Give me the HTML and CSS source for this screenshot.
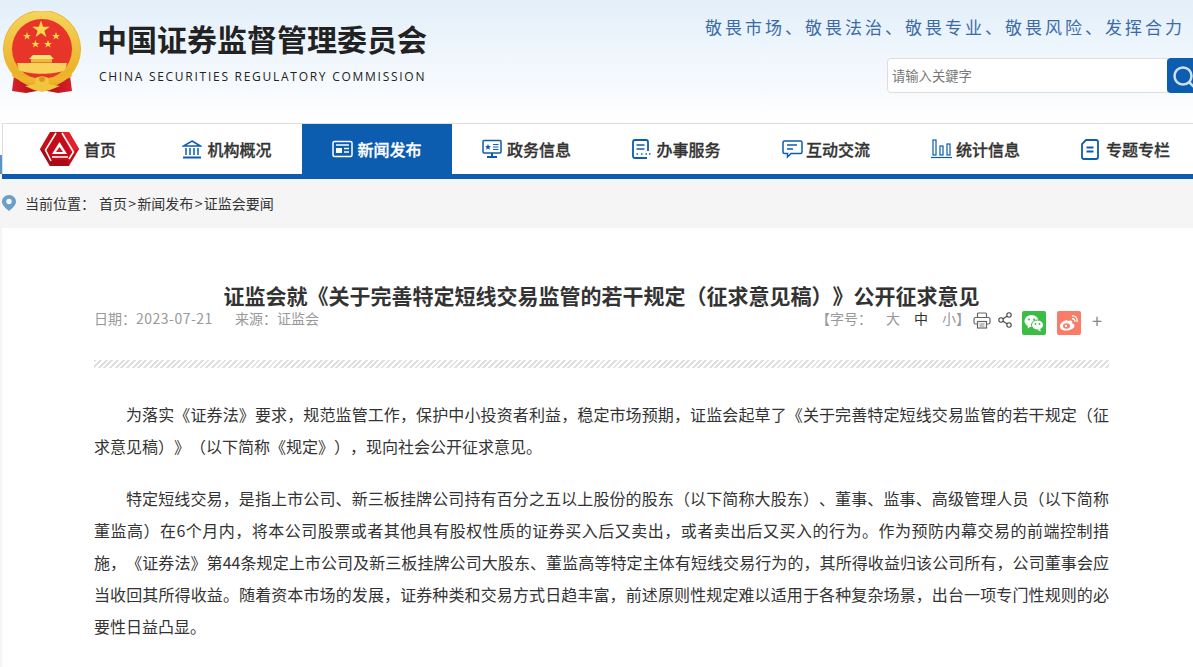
FILE: index.html
```html
<!DOCTYPE html>
<html lang="zh-CN">
<head>
  <meta charset="UTF-8" />
  <meta name="viewport" content="width=device-width, initial-scale=1" />
  <title>证监会就《关于完善特定短线交易监管的若干规定（征求意见稿）》公开征求意见</title>
  <link rel="stylesheet" href="styles.css">
</head>
<body>

<header class="header">
  <div class="wrap header-row">
    <div class="brand">
      <svg class="emblem" width="84" height="84" viewBox="2 11 84 84">
        <defs>
          <linearGradient id="gold" x1="0" y1="0" x2="0" y2="1">
            <stop offset="0" stop-color="#f6d45c"/>
            <stop offset="1" stop-color="#e9a91f"/>
          </linearGradient>
          <linearGradient id="drape" x1="0" y1="0" x2="1" y2="0">
            <stop offset="0" stop-color="#d8202a"/>
            <stop offset="0.5" stop-color="#a80f14"/>
            <stop offset="1" stop-color="#d8202a"/>
          </linearGradient>
        </defs>
        <path d="M15 68 L12 91 L26 93 L42 90 L58 93 L72 91 L69 68 Z" fill="url(#drape)"/>
        <circle cx="42" cy="49" r="38.500" fill="url(#gold)" stroke="#eab62e" stroke-width="1"/>
        <circle cx="42" cy="49" r="30" fill="#e8352a"/>
        <polygon points="41,20.500 43.100,26.800 49.700,26.800 44.400,30.700 46.400,37 41,33.100 35.600,37 37.600,30.700 32.300,26.800 38.900,26.800" fill="#fbd84e"/>
        <polygon points="27,32 28,34.900 31,34.900 28.600,36.700 29.500,39.500 27,37.800 24.500,39.500 25.400,36.700 23,34.900 26,34.900" fill="#fbd84e"/>
        <polygon points="56,32 57,34.900 60,34.900 57.600,36.700 58.500,39.500 56,37.800 53.500,39.500 54.400,36.700 52,34.900 55,34.900" fill="#fbd84e"/>
        <polygon points="35.500,40 36.500,42.900 39.500,42.900 37.100,44.700 38,47.500 35.500,45.800 33,47.500 33.900,44.700 31.500,42.900 34.500,42.900" fill="#fbd84e"/>
        <polygon points="48,40 49,42.900 52,42.900 49.600,44.700 50.500,47.500 48,45.800 45.500,47.500 46.400,44.700 44,42.900 47,42.900" fill="#fbd84e"/>
        <path d="M33 55 H50 L54 59 H29 Z" fill="#fce27a"/>
        <rect x="31" y="59" width="21" height="3.500" fill="#efba39"/>
        <path d="M17 63 H67 L65 70 C56 75 28 75 19 70 Z" fill="#f8d25a"/>
        <path d="M13 72 C22 80 62 80 71 72 L72 76 C60 86 24 86 12 76 Z" fill="#eeb52c"/>
        <path d="M25 86 L35 84 L36 78 C38 76 46 76 48 78 L49 84 L60 86 L50 90 L42 92 L34 90 Z" fill="#f2c440"/>
        <circle cx="42" cy="79" r="3" fill="#d99a1a"/>
      </svg>
      <div class="brand-text">
        <h1 class="brand-cn">中国证券监督管理委员会</h1>
        <div class="brand-en">CHINA SECURITIES REGULATORY COMMISSION</div>
      </div>
    </div>
    <div class="header-right">
      <div class="slogan">敬畏市场、敬畏法治、敬畏专业、敬畏风险、发挥合力</div>
      <form class="search">
        <input class="search-input" type="text" placeholder="请输入关鍵字" />
        <button class="search-btn" type="button" aria-label="搜索">
          <svg width="30" height="30" viewBox="0 0 30 30" fill="none" stroke="#cfe0f0" stroke-width="2.500"><circle cx="11" cy="15" r="8.500"/><path d="M17 21 L22 26"/></svg>
        </button>
      </form>
    </div>
  </div>
</header>

<div class="nav-shell">
  <nav class="nav">
    <ul class="nav-list">
      <li class="nav-item nav-item-first">
        <svg class="logo-mark" width="39" height="34" viewBox="0 0 39 34">
          <polygon points="10,0 29,0 39,17 29,34 10,34 0,17" fill="#c40d18"/>
          <polygon points="22,0 29,0 39,17 31,20" fill="#e4202c"/>
          <polygon points="0,17 10,34 29,34 27,28 11,28 6,18" fill="#a90a13"/>
          <path d="M16 1 L5.500 18 L11 29 M22 1 L33.500 20 L29 27 M12 25 H28" fill="none" stroke="#fff" stroke-width="1.600"/>
          <path d="M19.500 10 L27 22 H12 Z" fill="#fff"/>
          <polygon points="19.500,15 23,20 16,20" fill="#d5141f"/>
        </svg>
        <span>首页</span>
      </li>
      <li class="nav-item nav-item-wide">
        <svg class="nav-icon" width="20" height="20" viewBox="0 0 20 20" fill="none" stroke="currentColor" stroke-width="1.500"><path d="M10 2 L18.500 7 H1.500 Z"/><path d="M4 9 V16 M8 9 V16 M12 9 V16 M16 9 V16"/><path d="M1 18.500 H19" stroke-width="2"/></svg>
        <span>机构概况</span>
      </li>
      <li class="nav-item active">
        <svg class="nav-icon" width="21" height="18" viewBox="0 0 21 18" fill="none" stroke="currentColor" stroke-width="1.500"><rect x="1" y="1.500" width="19" height="15" rx="1.500"/><path d="M4 5 H17"/><rect x="4" y="8" width="6" height="5" fill="currentColor" stroke="none"/><path d="M12 8.500 H17 M12 12 H17"/></svg>
        <span>新闻发布</span>
      </li>
      <li class="nav-item nav-item-mid">
        <svg class="nav-icon" width="20" height="20" viewBox="0 0 20 20" fill="none" stroke="currentColor" stroke-width="1.500"><rect x="1" y="1.500" width="18" height="12.500" rx="1"/><path d="M6 5 L6.900 7 L9 7.200 L7.400 8.600 L7.900 10.700 L6 9.600 L4.100 10.700 L4.600 8.600 L3 7.200 L5.100 7 Z" fill="currentColor" stroke="none"/><path d="M11 5.500 H16.500 M11 8 H16.500 M11 10.500 H16.500" stroke-width="1.200"/><path d="M10 14 V17 M5 18 H15" stroke-width="2"/></svg>
        <span>政务信息</span>
      </li>
      <li class="nav-item nav-item-mid">
        <svg class="nav-icon" width="19" height="20" viewBox="0 0 19 20" fill="none" stroke="currentColor" stroke-width="1.800"><path d="M15 19 H3 Q1 19 1 17 V3 Q1 1 3 1 H14 Q16 1 16 3 V12"/><path d="M4.500 6 H12.500 M4.500 10 H12.500" stroke-width="1.500"/><path d="M4.500 15 H6 M9 15 H10.500 M13.500 15 H15 M17 15 H18.500" stroke-width="1.500"/></svg>
        <span>办事服务</span>
      </li>
      <li class="nav-item nav-item-tight">
        <svg class="nav-icon" width="21" height="19" viewBox="0 0 21 19" fill="none" stroke="currentColor" stroke-width="1.500"><path d="M2.500 1 H18.500 Q20 1 20 2.500 V12 Q20 13.500 18.500 13.500 H9 L5.500 17 V13.500 H2.500 Q1 13.500 1 12 V2.500 Q1 1 2.500 1 Z"/><path d="M5 5 H15 M5 9 H11"/></svg>
        <span>互动交流</span>
      </li>
      <li class="nav-item nav-item-left">
        <svg class="nav-icon" width="21" height="20" viewBox="0 0 21 20" fill="none" stroke="currentColor" stroke-width="1.200"><rect x="2" y="1" width="3" height="15"/><rect x="9" y="7" width="3" height="9"/><rect x="16" y="5" width="3" height="11"/><path d="M0 18.500 H21"/></svg>
        <span>统计信息</span>
      </li>
      <li class="nav-item nav-item-last">
        <svg class="nav-icon" width="18" height="21" viewBox="0 0 18 21" fill="none" stroke="currentColor" stroke-width="1.800"><path d="M5 1 H15 Q17 1 17 3 V18 Q17 20 15 20 H3 Q1 20 1 18 V5 Z"/><path d="M5.500 8.500 H12.500 M5.500 12.500 H12.500"/></svg>
        <span>专题专栏</span>
      </li>
    </ul>
  </nav>
</div>

<div class="crumb">
  <div class="wrap crumb-row">
    <svg class="crumb-pin" width="14" height="16" viewBox="0 0 14 16"><path d="M7 0 C3 0 0 3 0 6.500 C0 10.500 4 13.500 7 16 C10 13.500 14 10.500 14 6.500 C14 3 11 0 7 0 Z" fill="#6a9fc9"/><circle cx="7" cy="6.500" r="2.700" fill="#f5f5f5"/></svg>
    <span class="crumb-label">当前位置：</span>
    <span>首页<span class="sep">&gt;</span>新闻发布<span class="sep">&gt;</span>证监会要闻</span>
  </div>
</div>

<main class="wrap article">
  <h2 class="article-title">证监会就《关于完善特定短线交易监管的若干规定（征求意见稿）》公开征求意见</h2>
  <div class="meta">
    <div class="meta-left">
      <span class="meta-date">日期：<span class="digits">2023-07-21</span></span>
      <span>来源：证监会</span>
    </div>
    <div class="meta-right">
      <span class="fontsize">【字号：</span>
      <span class="size-opt">大</span>
      <span class="size-opt current">中</span>
      <span class="size-opt">小</span>
      <span class="fontsize-end">】</span>
      <svg class="tool" width="18" height="17" viewBox="0 0 18 17" fill="none" stroke="#666" stroke-width="1.200"><rect x="4.500" y="1" width="9" height="4.500" rx="1"/><path d="M4 12 H2.500 Q1 12 1 10.500 V7 Q1 5.500 2.500 5.500 H15.500 Q17 5.500 17 7 V10.500 Q17 12 15.500 12 H14"/><rect x="4.500" y="9.500" width="9" height="6.500"/><path d="M6.500 12 H11.500 M6.500 14 H11.500" stroke-width="0.800"/></svg>
      <svg class="tool" width="14" height="16" viewBox="0 0 14 16" fill="none" stroke="#444" stroke-width="1.100"><circle cx="3" cy="8" r="2.200"/><circle cx="11" cy="3" r="2.200"/><circle cx="11" cy="13" r="2.200"/><path d="M5 6.800 L9 4.200 M5 9.200 L9 11.800"/></svg>
      <span class="share share-wx">
        <svg width="20" height="18" viewBox="0 0 20 18"><ellipse cx="7.500" cy="7" rx="7" ry="6" fill="#fff"/><path d="M4 11.500 L3.500 14.500 L7 12.500 Z" fill="#fff"/><ellipse cx="13.500" cy="11" rx="6" ry="5" fill="#fff" stroke="#3abd45"/><path d="M16 15 L17 17.500 L13.500 16 Z" fill="#fff"/><circle cx="5" cy="5.500" r="1" fill="#3abd45"/><circle cx="10" cy="5.500" r="1" fill="#3abd45"/><circle cx="11.500" cy="10" r="0.900" fill="#3abd45"/><circle cx="15.500" cy="10" r="0.900" fill="#3abd45"/></svg>
      </span>
      <span class="share share-wb">
        <svg width="20" height="18" viewBox="0 0 20 18" fill="none"><path d="M8 6 C3.500 7 .5 10 1 13 C1.500 16 5 17 8.500 16.500 C12.500 16 15.500 14 15.500 11.500 C15.500 10 14 9.500 13 9.200 C14 7 12.500 5.500 8 7.200 C9 5.500 8.500 5.500 8 6 Z" fill="#fff"/><ellipse cx="7.500" cy="12" rx="3.500" ry="2.700" fill="#f97c68"/><circle cx="7" cy="12" r="1.200" fill="#fff"/><path d="M13 2 C16 1.500 19 4 18 8 M13 4.800 C15 4.500 16.300 6 15.800 7.800" stroke="#fff" stroke-width="1.300"/></svg>
      </span>
      <span class="more">+</span>
    </div>
  </div>
  <div class="stripe"></div>
  <div class="article-body">
    <p>为落实《证券法》要求，规范监管工作，保护中小投资者利益，稳定市场预期，证监会起草了《关于完善特定短线交易监管的若干规定（征求意见稿）》（以下简称《规定》），现向社会公开征求意见。</p>
    <p>特定短线交易，是指上市公司、新三板挂牌公司持有百分之五以上股份的股东（以下简称大股东）、董事、监事、高级管理人员（以下简称董监高）在6个月内，将本公司股票或者其他具有股权性质的证券买入后又卖出，或者卖出后又买入的行为。作为预防内幕交易的前端控制措施，《证券法》第44条规定上市公司及新三板挂牌公司大股东、董监高等特定主体有短线交易行为的，其所得收益归该公司所有，公司董事会应当收回其所得收益。随着资本市场的发展，证券种类和交易方式日趋丰富，前述原则性规定难以适用于各种复杂场景，出台一项专门性规则的必要性日益凸显。</p>
  </div>
</main>

</body>
</html>
```

FILE: styles.css
```css
html, body {
  margin: 0;
  overflow-x: hidden;
}
body {
  font-family: "Noto Sans CJK SC", "Liberation Sans", sans-serif;
  color: #333;
  background: #f5f5f5;
  text-spacing-trim: space-all;
}
.wrap {
  width: 1200px;
  margin-left: 2px;
  box-sizing: border-box;
}
.header {
  height: 123px;
  background: linear-gradient(#e3effa, #fff);
}
.header-row {
  display: flex;
  justify-content: space-between;
  height: 100%;
}
.brand {
  display: flex;
  padding-top: 11px;
}
.emblem {
  flex: none;
}
.brand-text {
  margin-left: 13px;
}
.brand-cn {
  margin: 7px 0 0 -2px;
  font-size: 30px;
  line-height: 40px;
  font-weight: 700;
  color: #222;
}
.brand-en {
  margin-top: 9px;
  font-family: "Open Sans", "Liberation Sans", sans-serif;
  font-size: 12px;
  line-height: 20px;
  letter-spacing: 1.730px;
  color: #222;
  white-space: nowrap;
}
.header-right {
  display: flex;
  flex-direction: column;
  align-items: flex-end;
  padding-top: 14px;
}
.slogan {
  margin-right: 17px;
  font-size: 17px;
  line-height: 26px;
  letter-spacing: 3px;
  color: #3a6ba6;
  white-space: nowrap;
}
.search {
  display: flex;
  margin-top: 18px;
}
.search-input {
  width: 281px;
  height: 35px;
  padding: 0 4px;
  box-sizing: border-box;
  border: 1px solid #ddd;
  border-radius: 4px 0 0 4px;
  font-family: inherit;
  font-size: 13.300px;
  background: #fff;
}
.search-input::placeholder {
  color: #777;
}
.search-btn {
  display: flex;
  align-items: center;
  width: 35px;
  height: 35px;
  padding: 0 0 0 5px;
  border: none;
  border-radius: 4px 0 0 4px;
  background: #0c5cb0;
  margin-left: -1px;
}
.nav-shell {
  position: relative;
  background: #fff;
}
.nav-shell::before {
  content: "";
  position: absolute;
  left: 0;
  bottom: 5px;
  width: 2px;
  height: 19px;
  background: #5b93c8;
}
.nav {
  margin-left: 2px;
  border-top: 1px solid #ddd;
  border-bottom: 5px solid #0c5cb0;
  box-shadow: inset 1px 0 #ddd;
}
.nav-list {
  display: flex;
  margin: 0;
  padding: 0;
  list-style: none;
}
.nav-item {
  flex: 0 0 150px;
  height: 50px;
  box-sizing: border-box;
  display: flex;
  align-items: center;
  justify-content: center;
  gap: 4px;
  font-size: 16px;
  font-weight: 500;
  -webkit-text-stroke: 0.300px currentColor;
  color: #333;
}
.nav-item.active {
  background: #0c5cb0;
  color: #fff;
}
.nav-item-first {
  gap: 5px;
  padding-left: 2px;
}
.nav-item-wide {
  gap: 5px;
}
.nav-item-mid {
  gap: 5px;
  padding-right: 1px;
}
.nav-item-tight {
  gap: 3px;
  padding-right: 2px;
}
.nav-item-left {
  padding-right: 3px;
}
.nav-item-last {
  gap: 7px;
  padding-right: 3px;
}
.nav-icon {
  color: #0c5cb0;
  -webkit-text-stroke: 0;
}
.active .nav-icon {
  color: #fff;
}
.crumb {
  height: 49px;
  background: #f5f5f5;
}
.crumb-row {
  display: flex;
  align-items: center;
  height: 47px;
  font-size: 14px;
}
.crumb-label {
  margin-left: 9px;
  margin-right: 4px;
}
.sep {
  margin: 0 1.300px;
}
.article {
  padding: 55px 93px 5px 92px;
  background: #fff;
}
.article-title {
  margin: 0;
  font-size: 21px;
  line-height: 24px;
  font-weight: 700;
  text-align: center;
  color: #333;
}
.meta {
  display: flex;
  justify-content: space-between;
  align-items: flex-start;
  height: 28px;
  font-size: 14px;
  line-height: 22px;
  color: #999;
}
.meta-date {
  margin-right: 19px;
}
.digits {
  letter-spacing: 0.500px;
}
.meta-right {
  display: flex;
  align-items: flex-start;
  padding-right: 7px;
}
.size-opt {
  margin-right: 14px;
}
.size-opt.current {
  color: #333;
}
.fontsize {
  margin-right: 14px;
}
.fontsize-end {
  margin-left: -14px;
  margin-right: -4px;
}
.tool {
  margin-top: 5px;
  margin-left: 7px;
}
.share {
  display: flex;
  align-items: center;
  justify-content: center;
  width: 24px;
  height: 24px;
  margin-top: 4px;
  margin-left: 10px;
  border-radius: 2px;
}
.share-wx {
  background: #3abd45;
}
.share-wb {
  margin-left: 11px;
  background: #f97c68;
}
.more {
  margin-top: 2px;
  margin-left: 11px;
  font-size: 18px;
  color: #888;
}
.stripe {
  height: 8px;
  margin-top: 25px;
  background: repeating-linear-gradient(135deg, #e0e0e0 0, #e0e0e0 2px, #fff 2px, #fff 4px);
}
.article-body {
  margin-top: 30px;
  font-size: 16px;
  line-height: 32px;
  color: #333;
}
.article-body p {
  margin: 0 0 20px;
  text-indent: 2em;
  text-align: justify;
}
```
